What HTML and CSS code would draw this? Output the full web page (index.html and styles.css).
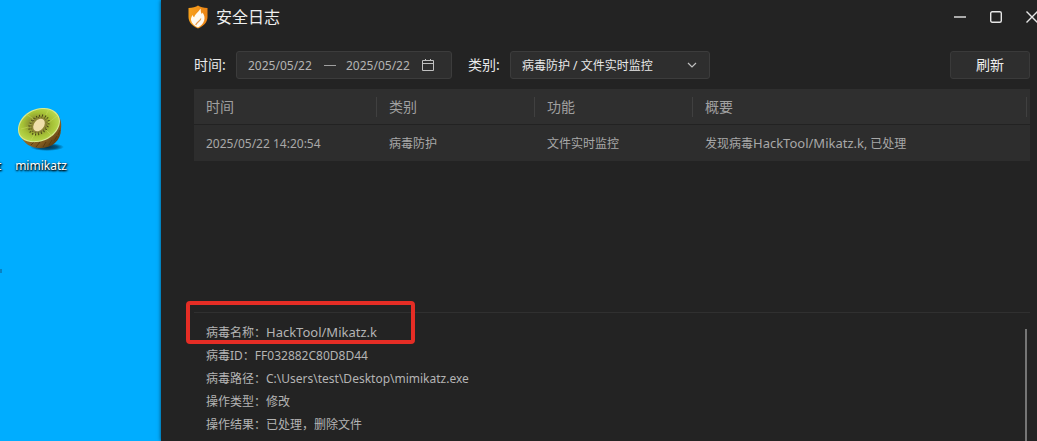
FILE: index.html
```html
<!DOCTYPE html>
<html lang="zh-CN">
<head>
  <meta charset="UTF-8">
  <meta name="viewport" content="width=device-width, initial-scale=1.0">
  <title>安全日志</title>
  <link rel="stylesheet" href="styles.css">
</head>
<body>
  <div class="desktop">
    <span class="edge-label">t</span>
    <span class="edge-dot"></span>
    <div class="shortcut">
      <svg class="kiwi" width="52" height="48" viewBox="0 0 52 48">
        <defs>
          <radialGradient id="flesh" cx="46%" cy="48%" r="56%">
            <stop offset="0" stop-color="#d9d68a"/>
            <stop offset="0.4" stop-color="#8f9a30"/>
            <stop offset="0.65" stop-color="#a5c136"/>
            <stop offset="1" stop-color="#b9d94e"/>
          </radialGradient>
          <linearGradient id="skin" x1="0" y1="0" x2="1" y2="1">
            <stop offset="0" stop-color="#a58a34"/>
            <stop offset="0.7" stop-color="#80591f"/>
            <stop offset="1" stop-color="#382408"/>
          </linearGradient>
          <radialGradient id="shade">
            <stop offset="0" stop-color="#02304a"/>
            <stop offset="0.6" stop-color="#02304a" stop-opacity="0.7"/>
            <stop offset="1" stop-color="#02304a" stop-opacity="0"/>
          </radialGradient>
        </defs>
        <ellipse cx="33" cy="42" rx="17" ry="4" fill="url(#shade)"/>
        <path d="M6 30C10 39 17 43 26 43C38 43 47 36 47 24C48 17 46 12 43 8Z" fill="url(#skin)"/>
        <path d="M17 40l3-3M22 42l4-5M29 42l3-5M35 40l3-5M40 36l3-5M44 30l2-5" stroke="#5b3b10" stroke-width="1"/>
        <path d="M4 25C4 14 14 4 28 3C38 2 46 8 46 16C46 26 36 36 23 37C11 38 4 33 4 25Z" fill="#d8ea90"/>
        <path d="M5 25C5 15 15 5 28 4C37 3 45 9 45 16C45 25 35 35 23 36C12 37 5 32 5 25Z" fill="url(#flesh)"/>
        <path d="M24 17L12 9M31 12L35 4M34 18L43 11M32 25L38 31M22 27L17 35M18 21L7 24" stroke="#cbdd63" stroke-width="1" opacity="0.5"/>
        <ellipse cx="25" cy="20" rx="11" ry="8" transform="rotate(-42 25 20)" fill="none" stroke="#494317" stroke-width="2" stroke-dasharray="1 2"/>
        <ellipse cx="25" cy="20" rx="9" ry="7" transform="rotate(-42 25 20)" fill="#8c8736" stroke="#5c5520" stroke-width="1" stroke-dasharray="1 2"/>
        <ellipse cx="25" cy="20" rx="7" ry="5" transform="rotate(-52 25 20)" fill="#efdfaa"/>
      </svg>
      <span class="shortcut-name">mimikatz</span>
    </div>
  </div>

  <div class="window">
    <div class="titlebar">
      <svg class="logo" width="20" height="24" viewBox="0 0 20 24">
        <defs>
          <linearGradient id="shield" x1="0" y1="0" x2="1" y2="0">
            <stop offset="0" stop-color="#f7a11c"/>
            <stop offset="1" stop-color="#ec8416"/>
          </linearGradient>
        </defs>
        <path d="M10 0.500C12 2 15.500 3 19.500 3V12C19.500 17 16 21 10 23.500C4 21 0.500 17 0.500 12V3C4.500 3 8 2 10 0.500Z" fill="url(#shield)"/>
        <path d="M12.500 3.500C13 6 12.700 7.500 13.800 9C14.200 8.300 14.500 8 14.600 7.500C16.300 10 17 12.500 16.200 15.500C15.300 19 12.500 21 10 22.500C6.500 21 3.500 18.500 3 15C2.800 12.800 3.800 11.300 4.600 10C5 11.200 5.500 11.800 6.200 12.300C7 8.500 10.500 7.500 12.500 3.500Z" fill="#fffaf0"/>
        <path d="M12.800 13.500C12.500 16.300 8.800 16.500 7.700 20" stroke="#e89a4a" stroke-width="1.200" fill="none"/>
      </svg>
      <span class="title">安全日志</span>
      <div class="window-buttons">
        <button type="button" aria-label="最小化">
          <svg width="12" height="12" viewBox="0 0 12 12"><path d="M0 6H12"/></svg>
        </button>
        <button type="button" aria-label="最大化">
          <svg width="12" height="12" viewBox="0 0 12 12"><rect x="0.700" y="0.700" width="10.600" height="10.600" rx="1.500"/></svg>
        </button>
        <button type="button" aria-label="关闭">
          <svg width="12" height="12" viewBox="0 0 12 12"><path d="M0.500 0.500L11.500 11.500M11.500 0.500L0.500 11.500"/></svg>
        </button>
      </div>
    </div>

    <div class="toolbar">
      <label for="dateFrom">时间:</label>
      <div class="date-range">
        <input type="text" id="dateFrom" value="2025/05/22">
        <span class="dash"></span>
        <input type="text" id="dateTo" aria-label="结束时间" value="2025/05/22">
        <svg class="calendar" width="14" height="12" viewBox="0 0 14 12"><path d="M1.500 1.500H12.500V11.500H1.500ZM1.500 4.500H12.500M4.500 0V2M9.500 0V2"/></svg>
      </div>
      <label for="category">类别:</label>
      <div class="select-box">
        <select id="category">
          <option>病毒防护 / 文件实时监控</option>
        </select>
        <svg class="chevron" width="10" height="6" viewBox="0 0 10 6"><path d="M1 1L5 5L9 1"/></svg>
      </div>
      <button type="button" class="refresh">刷新</button>
    </div>

    <div class="log-list">
      <table>
        <thead>
          <tr>
            <th class="col-time"><span>时间</span></th>
            <th class="col-type"><span>类别</span></th>
            <th class="col-type"><span>功能</span></th>
            <th class="col-summary"><span>概要</span></th>
          </tr>
        </thead>
        <tbody>
          <tr>
            <td>2025/05/22 14:20:54</td>
            <td>病毒防护</td>
            <td>文件实时监控</td>
            <td>发现病毒<span class="virus-name">HackTool/Mikatz.k</span>, 已处理</td>
          </tr>
        </tbody>
      </table>
    </div>

    <div class="detail">
      <div class="highlight"></div>
      <div class="detail-text">
        <p>病毒名称：<span class="virus-name">HackTool/Mikatz.k</span></p>
        <p>病毒ID：FF032882C80D8D44</p>
        <p>病毒路径：C:\Users\test\Desktop\mimikatz.exe</p>
        <p>操作类型：修改</p>
        <p>操作结果：已处理，删除文件</p>
      </div>
      <div class="scrollbar"></div>
    </div>
  </div>
</body>
</html>
```
FILE: styles.css
```css
* {
  box-sizing: border-box;
}
body {
  margin: 0;
  height: 100vh;
  display: flex;
  overflow: hidden;
  font-family: "Noto Sans", "Noto Sans CJK SC", sans-serif;
  font-size: 12px;
  color: #b4b4b4;
  background-color: #00adff;
}
button, input, select {
  font-family: inherit;
  font-size: 12px;
  margin: 0;
}

/* Desktop */
.desktop {
  position: relative;
  flex: 0 0 161px;
  background-color: #00adff;
}
.shortcut {
  position: absolute;
  top: 105px;
  left: 4px;
  width: 74px;
  display: flex;
  flex-direction: column;
  align-items: center;
  gap: 5px;
}
.kiwi {
  margin-right: 2px;
}
.shortcut-name, .edge-label {
  color: #fff;
  line-height: 16px;
  text-shadow: 0 1px 2px #000, 1px 1px 2px #000;
}
.edge-label {
  position: absolute;
  top: 158px;
  left: -3px;
}
.edge-dot {
  position: absolute;
  top: 269px;
  left: 0;
  width: 2px;
  height: 4px;
  background-color: #0883c4;
}

/* Window */
.window {
  flex: 1;
  min-width: 0;
  display: flex;
  flex-direction: column;
  overflow: hidden;
  background-color: #232323;
  box-shadow: 0 0 4px rgba(0, 0, 0, 0.6);
  z-index: 1;
}
.titlebar {
  height: 34px;
  padding-left: 27px;
  display: flex;
  align-items: center;
  gap: 8px;
}
.title {
  font-size: 16px;
  line-height: 24px;
  color: #eee;
}
.window-buttons {
  display: flex;
  margin-left: auto;
  margin-right: -13px;
}
.window-buttons button {
  width: 36px;
  height: 34px;
  padding: 0;
  border: none;
  background: none;
  display: flex;
  align-items: center;
  justify-content: center;
}
.window-buttons svg {
  fill: none;
  stroke: #e6e6e6;
  stroke-width: 1.4;
}

/* Filters */
.toolbar {
  display: flex;
  align-items: center;
  padding: 17px 7px 10px 33px;
}
.toolbar label {
  width: 42px;
  font-size: 14px;
  line-height: 20px;
  color: #e8e8e8;
}
.date-range {
  width: 216px;
  height: 28px;
  margin-right: 16px;
  padding-left: 11px;
  display: flex;
  align-items: center;
  border: 1px solid #3c3c3c;
  border-radius: 3px;
  background-color: #2e2e2e;
}
.date-range input {
  width: 66px;
  padding: 0;
  border: none;
  background: none;
  color: #b4b4b4;
}
.dash {
  width: 12px;
  height: 1px;
  margin: 0 10px;
  background-color: #a0a0a0;
}
.calendar {
  margin-left: 9px;
  fill: none;
  stroke: #c0c0c0;
}
.select-box {
  position: relative;
  width: 200px;
}
.select-box select {
  appearance: none;
  width: 100%;
  height: 28px;
  padding: 0 30px 0 11px;
  border: 1px solid #3c3c3c;
  border-radius: 3px;
  background-color: #2e2e2e;
  color: #e8e8e8;
}
.chevron {
  position: absolute;
  top: 11px;
  right: 13px;
  fill: none;
  stroke: #c0c0c0;
  stroke-width: 1.2;
  pointer-events: none;
}
.refresh {
  width: 80px;
  height: 28px;
  margin-left: auto;
  padding: 0;
  border: 1px solid #3a3a3a;
  border-radius: 3px;
  background-color: #2e2e2e;
  color: #eee;
}
.toolbar .refresh {
  font-size: 14px;
  line-height: 20px;
}

/* Log table */
.log-list {
  flex: 1;
  padding: 0 7px 0 33px;
}
table {
  width: 100%;
  table-layout: fixed;
  border-collapse: separate;
  border-spacing: 0;
  background-color: #2d2d2d;
}
th, td {
  height: 36px;
  padding: 0 0 0 12px;
  text-align: left;
  white-space: nowrap;
}
th {
  padding-left: 0;
  font-size: 14px;
  font-weight: normal;
  color: #a0a0a0;
  background-color: #2f2f2f;
  border-bottom: 1px solid #222;
}
th span {
  display: block;
  padding-left: 12px;
  line-height: 20px;
  border-right: 1px solid #404040;
}
.col-time {
  width: 183px;
}
.col-type {
  width: 158px;
}
.col-summary {
  padding-right: 3px;
}
td {
  color: #a8a8a8;
}
.virus-name {
  font-size: 13px;
}

/* Detail */
.detail {
  position: relative;
  flex: 0 0 129px;
  display: flex;
  justify-content: space-between;
  margin: 0 7px 0 33px;
  border-top: 1px solid #303030;
}
.detail-text {
  padding: 8px 0 0 12px;
}
.detail p {
  margin: 0;
  height: 23px;
  line-height: 23px;
}
.scrollbar {
  width: 2px;
  margin: 16px 3px 0 0;
  background-color: #757575;
}
.highlight {
  position: absolute;
  top: -12px;
  left: -8px;
  width: 229px;
  height: 43px;
  border: 4px solid #e52d25;
  border-radius: 4px;
}
```
